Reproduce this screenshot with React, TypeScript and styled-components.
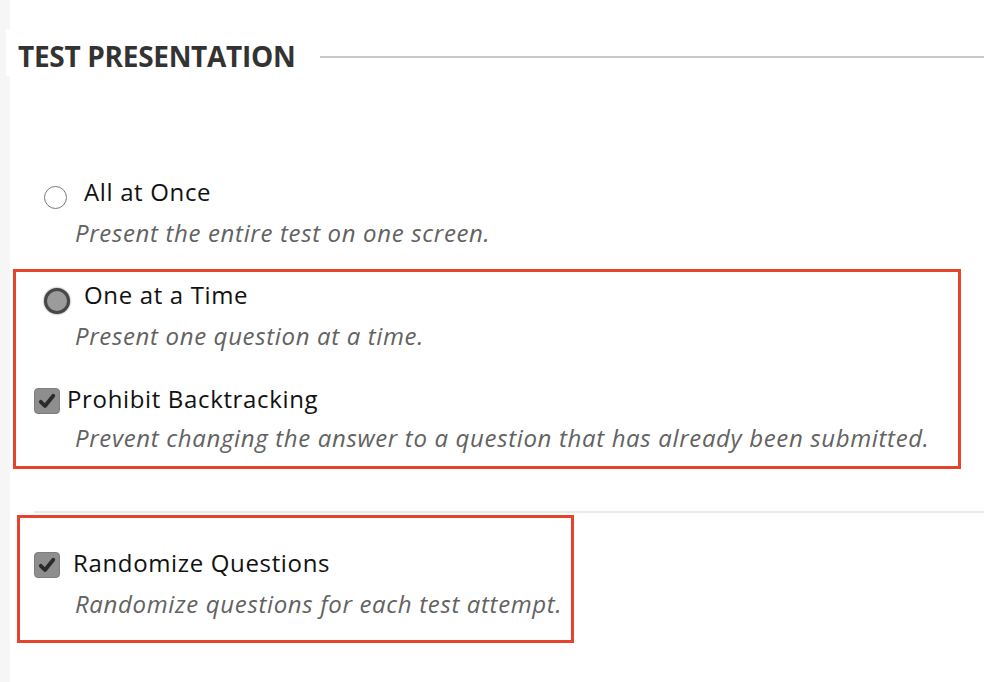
import React from "react";
import styled, { createGlobalStyle } from "styled-components";

const Global = createGlobalStyle`
  html, body { margin: 0; padding: 0; background: #fff; }
  body { font-family: "Open Sans", "Liberation Sans", sans-serif; }
`;

const Page = styled.div`
  display: flex;
  min-height: 682px;
  width: 984px;
  overflow: hidden;
`;

const Strip = styled.div`
  width: 10px;
  flex: none;
  background: #f6f6f6;
`;

const Main = styled.div`
  flex: 1;
  display: flex;
  flex-direction: column;
  padding-top: 29px;
`;

const HeaderRow = styled.div`
  display: flex;
  align-items: flex-start;
  margin-left: -4px;
`;

const Heading = styled.h2`
  margin: 0;
  height: 47px;
  box-sizing: border-box;
  padding: 6px 12px 0 12px;
  background: #fff;
  font-size: 28px;
  letter-spacing: -0.3px;
  line-height: 42px;
  font-weight: 700;
  color: #333;
  white-space: nowrap;
`;

const HeaderLine = styled.div`
  flex: 1;
  height: 2px;
  margin-top: 27px;
  margin-left: 13px;
  background: #c9c9c9;
`;

const Group = styled.div<{ $top: number; $left: number; $width?: number; $pt: number; $pb: number; $boxed?: boolean }>`
  margin-top: ${(p) => p.$top}px;
  margin-left: ${(p) => p.$left}px;
  width: ${(p) => (p.$width ? `${p.$width}px` : "auto")};
  box-sizing: border-box;
  padding-top: ${(p) => p.$pt}px;
  padding-bottom: ${(p) => p.$pb}px;
  border: ${(p) => (p.$boxed ? "3px solid #e5432b" : "none")};
`;

const Row = styled.div<{ $indent: number; $gap: number; $top?: number }>`
  display: flex;
  align-items: center;
  margin-left: ${(p) => p.$indent}px;
  margin-top: ${(p) => p.$top ?? 0}px;
  gap: ${(p) => p.$gap}px;
`;

const Label = styled.span`
  font-size: 24px;
  letter-spacing: 0.65px;
  line-height: 30px;
  color: #111;
  white-space: nowrap;
`;

const Desc = styled.div<{ $indent: number; $top: number }>`
  margin-left: ${(p) => p.$indent}px;
  margin-top: ${(p) => p.$top}px;
  font-size: 24px;
  letter-spacing: 0.65px;
  line-height: 30px;
  font-style: italic;
  color: #626262;
  white-space: nowrap;
`;

const Radio = styled.span<{ $checked?: boolean }>`
  flex: none;
  box-sizing: border-box;
  width: ${(p) => (p.$checked ? 26 : 23)}px;
  height: ${(p) => (p.$checked ? 26 : 23)}px;
  border-radius: 50%;
  border: ${(p) => (p.$checked ? "3.5px solid #474747" : "1.6px solid #7a7a7a")};
  background: ${(p) => (p.$checked ? "#9b9b9b" : "#fff")};
  box-shadow: ${(p) => (p.$checked ? "0 0 1.5px 0.5px rgba(0,0,0,0.35)" : "none")};
  transform: translateY(${(p) => (p.$checked ? 6 : 5)}px);
`;

const Check = styled.span`
  flex: none;
  box-sizing: border-box;
  width: 26px;
  height: 26px;
  border-radius: 4px;
  background: #8e8e8e;
  border: 1px solid #7e7e7e;
  display: flex;
  align-items: center;
  justify-content: center;
  transform: translateY(2px);
`;

const Divider = styled.div`
  margin-top: 42px;
  margin-left: 24px;
  height: 2px;
  background: #ebebeb;
`;

const CheckIcon = () => (
  <svg width="20" height="20" viewBox="0 0 20 20">
    <path d="M3.8 10.8 L8 15 L16.3 4.8" fill="none" stroke="#2a2a2a" strokeWidth="3.8" strokeLinecap="round" strokeLinejoin="round" />
  </svg>
);

export default function App() {
  return (
    <>
      <Global />
      <Page>
        <Strip />
        <Main>
          <HeaderRow>
            <Heading>TEST PRESENTATION</Heading>
            <HeaderLine />
          </HeaderRow>

          <Group $top={101} $left={0} $pt={0} $pb={0}>
            <Row $indent={34} $gap={17}>
              <Radio />
              <Label>All at Once</Label>
            </Row>
            <Desc $indent={65} $top={11}>Present the entire test on one screen.</Desc>
          </Group>

          <Group $top={21} $left={3} $width={948} $pt={8} $pb={13} $boxed>
            <Row $indent={28} $gap={14}>
              <Radio $checked />
              <Label>One at a Time</Label>
            </Row>
            <Desc $indent={59} $top={11}>Present one question at a time.</Desc>
            <Row $indent={18} $gap={7} $top={33}>
              <Check><CheckIcon /></Check>
              <Label>Prohibit Backtracking</Label>
            </Row>
            <Desc $indent={59} $top={9}>Prevent changing the answer to a question that has already been submitted.</Desc>
          </Group>

          <Divider />

          <Group $top={2} $left={7} $width={557} $pt={30} $pb={21} $boxed>
            <Row $indent={14} $gap={13}>
              <Check><CheckIcon /></Check>
              <Label>Randomize Questions</Label>
            </Row>
            <Desc $indent={55} $top={11}>Randomize questions for each test attempt.</Desc>
          </Group>
        </Main>
      </Page>
    </>
  );
}
